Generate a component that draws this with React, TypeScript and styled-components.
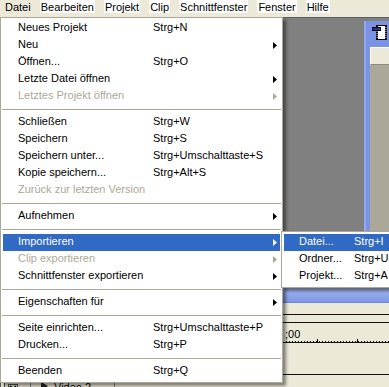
import React from "react";
import styled, { createGlobalStyle } from "styled-components";

const GlobalStyle = createGlobalStyle`
  html, body { margin: 0; padding: 0; }
  body {
    width: 389px; height: 387px; overflow: hidden; background: #ece9d8;
    font-family: "Liberation Sans", Arial, sans-serif; font-size: 11px; color: #000;
  }
  #root { width: 389px; height: 387px; }
`;

const Screen = styled.div`
  position: relative;
  width: 389px;
  height: 387px;
  overflow: hidden;
  display: flex;
  flex-direction: column;
  background: #ece9d8;
`;

/* ---------- menu bar ---------- */
const MenuBar = styled.div`
  flex: 0 0 17px;
  height: 17px;
  box-sizing: border-box;
  display: flex;
  align-items: flex-start;
  gap: 9px;
  padding-left: 5px;
  background: #ece9d8;
`;

const MenuTitle = styled.span<{ $open?: boolean }>`
  height: 13px;
  line-height: 15px;
  padding: 0 ${(p) => (p.$open ? 0 : 1)}px;
  background: ${(p) => (p.$open ? "transparent" : "#ffffff")};
  white-space: nowrap;
`;

/* ---------- background workspace ---------- */
const Desktop = styled.div`
  flex: 0 0 270px;
  box-sizing: border-box;
  background: #808080;
  border-top: 1px solid #5e5e5e;
  display: flex;
  padding: 3px 0 0 364px;
  overflow: hidden;
`;

const DocWindow = styled.div`
  flex: 0 0 60px;
  display: flex;
  flex-direction: column;
  border-left: 2px solid #93a8ef;
  padding-left: 4px;
  background: #7a93e4;
`;

const DocTitle = styled.div`
  flex: 0 0 26px;
  display: flex;
  align-items: flex-start;
  padding: 4px 0 0 2px;
  box-sizing: border-box;
`;

const DocHeader = styled.div`
  flex: 0 0 18px;
  box-sizing: border-box;
  background: #ece9d8;
  border-top: 1px solid #ffffff;
  border-left: 1px solid #ffffff;
  border-bottom: 1px solid #8d8a7e;
`;

const DocBody = styled.div`
  flex: 1;
  background: #aca899;
`;

const Timeline = styled.div`
  flex: 1;
  display: flex;
  flex-direction: column;
  background: #ece9d8;
`;

const TimelineTitle = styled.div`
  flex: 0 0 16px;
  box-sizing: border-box;
  background: linear-gradient(#a9bbf3, #7d96e6);
  border-bottom: 1px solid #6d86da;
`;

const TimelineToolbar = styled.div`
  flex: 0 0 12px;
  box-sizing: border-box;
  border-bottom: 1px solid #111;
`;

const TimeBar = styled.div`
  flex: 0 0 8px;
  box-sizing: border-box;
  border-bottom: 1px solid #111;
`;

const Ruler = styled.div`
  flex: 0 0 20px;
  box-sizing: border-box;
  border-bottom: 1px solid #111;
  padding: 5px 0 0 285px;
  line-height: 13px;
  background-image:
    repeating-linear-gradient(to right, #000 0 1px, transparent 1px 40px),
    repeating-linear-gradient(to right, #000 0 1px, transparent 1px 3px);
  background-size: 100% 3px, 100% 1px;
  background-position: 317px 100%, 286px 100%;
  background-repeat: no-repeat;
`;

const TrackArea = styled.div`
  flex: 0 0 32px;
  box-sizing: border-box;
  border-bottom: 1px solid #111;
`;

const TrackRow = styled.div`
  flex: 1;
  display: flex;
  line-height: 15px;
`;

const TrackEdge = styled.div`
  flex: 0 0 3px;
  border-left: 1px solid #555;
  border-right: 1px solid #555;
  margin-right: 3px;
`;

const TrackToggle = styled.div`
  flex: 0 0 23px;
  border-right: 1px solid #808080;
  padding-top: 8px;
  box-sizing: border-box;
`;

const TrackName = styled.div`
  flex: 0 0 84px;
  border-right: 1px solid #808080;
  display: flex;
  align-items: flex-start;
  gap: 6px;
  padding: 5px 0 0 10px;
  box-sizing: border-box;
`;

/* ---------- drop-down menus ---------- */
const Menu = styled.div<{ $left: number; $top: number; $width: number }>`
  position: absolute;
  left: ${(p) => p.$left}px;
  top: ${(p) => p.$top}px;
  width: ${(p) => p.$width}px;
  box-sizing: border-box;
  background: #ffffff;
  border: 1px solid #aca899;
  padding: 2px;
  box-shadow: 3px 3px 3px rgba(0, 0, 0, 0.45);
  z-index: 10;
`;

const Item = styled.div<{ $active?: boolean; $disabled?: boolean }>`
  display: flex;
  align-items: center;
  height: 17px;
  box-sizing: border-box;
  line-height: 15px;
  padding: 0 3px 2px 15px;
  white-space: nowrap;
  background: ${(p) => (p.$active ? "#316ac5" : "transparent")};
  color: ${(p) => (p.$active ? "#ffffff" : p.$disabled ? "#aca899" : "#000000")};
`;

const Label = styled.span<{ $width: number }>`
  flex: 0 0 ${(p) => p.$width}px;
`;

const Shortcut = styled.span`
  flex: 1;
`;

const ArrowIcon = styled.svg`
  flex: 0 0 4px;
  margin-top: 1px;
`;

const Separator = styled.div`
  height: 1px;
  margin: 4px -1px;
  background: #aca899;
`;

const Arrow = () => (
  <ArrowIcon width="4" height="7" viewBox="0 0 4 7">
    <polygon points="0,0 4,3.5 0,7" fill="currentColor" />
  </ArrowIcon>
);

type Entry =
  | { sep: true }
  | { sep?: false; label: string; shortcut?: string; sub?: boolean; disabled?: boolean; active?: boolean };

const fileMenu: Entry[] = [
  { label: "Neues Projekt", shortcut: "Strg+N" },
  { label: "Neu", sub: true },
  { label: "Öffnen...", shortcut: "Strg+O" },
  { label: "Letzte Datei öffnen", sub: true },
  { label: "Letztes Projekt öffnen", sub: true, disabled: true },
  { sep: true },
  { label: "Schließen", shortcut: "Strg+W" },
  { label: "Speichern", shortcut: "Strg+S" },
  { label: "Speichern unter...", shortcut: "Strg+Umschalttaste+S" },
  { label: "Kopie speichern...", shortcut: "Strg+Alt+S" },
  { label: "Zurück zur letzten Version", disabled: true },
  { sep: true },
  { label: "Aufnehmen", sub: true },
  { sep: true },
  { label: "Importieren", sub: true, active: true },
  { label: "Clip exportieren", sub: true, disabled: true },
  { label: "Schnittfenster exportieren", sub: true },
  { sep: true },
  { label: "Eigenschaften für", sub: true },
  { sep: true },
  { label: "Seite einrichten...", shortcut: "Strg+Umschalttaste+P" },
  { label: "Drucken...", shortcut: "Strg+P" },
  { sep: true },
  { label: "Beenden", shortcut: "Strg+Q" },
];

const importMenu: Entry[] = [
  { label: "Datei...", shortcut: "Strg+I", active: true },
  { label: "Ordner...", shortcut: "Strg+U" },
  { label: "Projekt...", shortcut: "Strg+A" },
];

const MenuList = ({ entries, labelWidth }: { entries: Entry[]; labelWidth: number }) => (
  <>
    {entries.map((e, i) =>
      e.sep ? (
        <Separator key={i} />
      ) : (
        <Item key={i} $active={e.active} $disabled={e.disabled}>
          <Label $width={labelWidth}>{e.label}</Label>
          <Shortcut>{e.shortcut ?? ""}</Shortcut>
          {e.sub && <Arrow />}
        </Item>
      )
    )}
  </>
);

const ClipIcon = () => (
  <svg width="15" height="15" viewBox="0 0 15 15">
    <rect x="4" y="0" width="11" height="15" fill="#000" />
    <rect x="6" y="1" width="7" height="13" fill="#fff" />
    {[2, 4, 6, 8, 10, 12].map((y) => (
      <React.Fragment key={y}>
        <rect x="4.6" y={y} width="0.9" height="1" fill="#fff" />
        <rect x="13.5" y={y} width="0.9" height="1" fill="#fff" />
      </React.Fragment>
    ))}
    <rect x="0" y="2" width="9" height="4" fill="#000" />
    <rect x="1" y="3" width="7" height="2" fill="#1d3a9a" />
  </svg>
);

const ToggleIcon = () => (
  <svg width="10" height="10" viewBox="0 0 10 10">
    <rect x="0.5" y="0.5" width="9" height="9" fill="none" stroke="#555" />
    <path d="M2 2 L8 8 M8 2 L2 8" stroke="#111" strokeWidth="2" />
  </svg>
);

const Twisty = () => (
  <svg width="7" height="8" viewBox="0 0 7 8" style={{ marginTop: 2 }}>
    <polygon points="0,0 7,4 0,8" fill="#222" />
  </svg>
);

export default function App() {
  return (
    <>
      <GlobalStyle />
      <Screen>
        <MenuBar>
          <MenuTitle $open>Datei</MenuTitle>
          <MenuTitle>Bearbeiten</MenuTitle>
          <MenuTitle>Projekt</MenuTitle>
          <MenuTitle>Clip</MenuTitle>
          <MenuTitle>Schnittfenster</MenuTitle>
          <MenuTitle>Fenster</MenuTitle>
          <MenuTitle>Hilfe</MenuTitle>
        </MenuBar>

        <Desktop>
          <DocWindow>
            <DocTitle>
              <ClipIcon />
            </DocTitle>
            <DocHeader />
            <DocBody />
          </DocWindow>
        </Desktop>

        <Timeline>
          <TimelineTitle />
          <TimelineToolbar />
          <TimeBar />
          <Ruler>;00</Ruler>
          <TrackArea />
          <TrackRow>
            <TrackEdge />
            <TrackToggle>
              <ToggleIcon />
            </TrackToggle>
            <TrackName>
              <Twisty />
              <span>Video 2</span>
            </TrackName>
          </TrackRow>
        </Timeline>

        <Menu $left={0} $top={17} $width={283}>
          <MenuList entries={fileMenu} labelWidth={135} />
        </Menu>
        <Menu $left={281} $top={231} $width={130}>
          <MenuList entries={importMenu} labelWidth={55} />
        </Menu>
      </Screen>
    </>
  );
}
